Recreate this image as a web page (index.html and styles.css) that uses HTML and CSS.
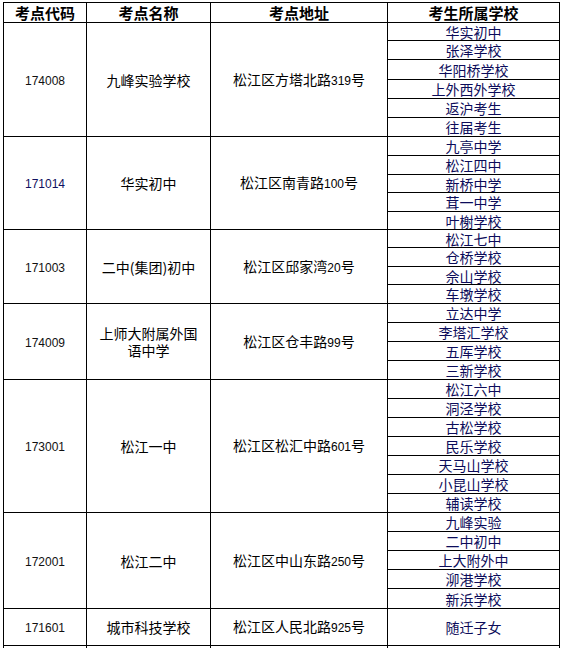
FILE: index.html
```html
<!DOCTYPE html>
<html lang="zh-CN">
<head>
<meta charset="utf-8">
<title>考点安排</title>
<link rel="stylesheet" href="styles.css">
</head>
<body>
<table class="exam">
  <colgroup>
    <col class="c-code">
    <col class="c-name">
    <col class="c-addr">
    <col class="c-school">
  </colgroup>
  <thead>
    <tr class="head">
      <th>考点代码</th>
      <th>考点名称</th>
      <th>考点地址</th>
      <th>考生所属学校</th>
    </tr>
  </thead>
  <tbody>
    <tr>
      <td rowspan="6" class="code"><span class="num">174008</span></td>
      <td rowspan="6" class="name">九峰实验学校</td>
      <td rowspan="6" class="addr">松江区方塔北路<span class="num">319</span>号</td>
      <td class="school r18">华实初中</td>
    </tr>
    <tr><td class="school">张泽学校</td></tr>
    <tr><td class="school r20">华阳桥学校</td></tr>
    <tr><td class="school">上外西外学校</td></tr>
    <tr><td class="school">返沪考生</td></tr>
    <tr><td class="school">往届考生</td></tr>

    <tr>
      <td rowspan="5" class="code navy"><span class="num">171014</span></td>
      <td rowspan="5" class="name">华实初中</td>
      <td rowspan="5" class="addr">松江区南青路<span class="num">100</span>号</td>
      <td class="school">九亭中学</td>
    </tr>
    <tr><td class="school">松江四中</td></tr>
    <tr><td class="school r18">新桥中学</td></tr>
    <tr><td class="school">茸一中学</td></tr>
    <tr><td class="school r18">叶榭学校</td></tr>

    <tr>
      <td rowspan="4" class="code"><span class="num">171003</span></td>
      <td rowspan="4" class="name">二中(集团)初中</td>
      <td rowspan="4" class="addr">松江区邱家湾<span class="num">20</span>号</td>
      <td class="school r18">松江七中</td>
    </tr>
    <tr><td class="school">仓桥学校</td></tr>
    <tr><td class="school r18">佘山学校</td></tr>
    <tr><td class="school">车墩学校</td></tr>

    <tr>
      <td rowspan="4" class="code"><span class="num">174009</span></td>
      <td rowspan="4" class="name two">上师大附属外国<br>语中学</td>
      <td rowspan="4" class="addr">松江区仓丰路<span class="num">99</span>号</td>
      <td class="school">立达中学</td>
    </tr>
    <tr><td class="school">李塔汇学校</td></tr>
    <tr><td class="school">五厍学校</td></tr>
    <tr><td class="school">三新学校</td></tr>

    <tr>
      <td rowspan="7" class="code"><span class="num">173001</span></td>
      <td rowspan="7" class="name">松江一中</td>
      <td rowspan="7" class="addr">松江区松汇中路<span class="num">601</span>号</td>
      <td class="school">松江六中</td>
    </tr>
    <tr><td class="school">洞泾学校</td></tr>
    <tr><td class="school">古松学校</td></tr>
    <tr><td class="school">民乐学校</td></tr>
    <tr><td class="school">天马山学校</td></tr>
    <tr><td class="school">小昆山学校</td></tr>
    <tr><td class="school">辅读学校</td></tr>

    <tr>
      <td rowspan="5" class="code"><span class="num">172001</span></td>
      <td rowspan="5" class="name">松江二中</td>
      <td rowspan="5" class="addr">松江区中山东路<span class="num">250</span>号</td>
      <td class="school">九峰实验</td>
    </tr>
    <tr><td class="school">二中初中</td></tr>
    <tr><td class="school">上大附外中</td></tr>
    <tr><td class="school">泖港学校</td></tr>
    <tr><td class="school r20">新浜学校</td></tr>

    <tr class="last">
      <td class="code"><span class="num">171601</span></td>
      <td class="name">城市科技学校</td>
      <td class="addr">松江区人民北路<span class="num">925</span>号</td>
      <td class="school fade">随迁子女</td>
    </tr>
    <tr class="tail">
      <td></td><td></td><td></td><td></td>
    </tr>
  </tbody>
</table>
</body>
</html>
```

FILE: styles.css
```css
html, body {
  margin: 0;
  padding: 0;
  background: #ffffff;
}

body {
  font-family: "Noto Sans CJK SC", "Liberation Sans", sans-serif;
  font-size: 14px;
  color: #000000;
}

.exam {
  border-collapse: collapse;
  table-layout: fixed;
  width: 556px;
  margin: 2px 0 0 3px;
}

.c-code { width: 83px; }
.c-name { width: 124px; }
.c-addr { width: 177px; }
.c-school { width: 172px; }

.exam th,
.exam td {
  border: 1px solid #000000;
  padding: 0;
  text-align: center;
  vertical-align: middle;
  line-height: 16px;
}

.head th {
  height: 19px;
  font-size: 15px;
  font-weight: 700;
  line-height: 18px;
}

.exam td.name.two {
  line-height: 17px;
}

.exam td.school {
  height: 18px;
  color: #0c0c5a;
  line-height: 16px;
}

.exam td.school.r18 { height: 17px; }
.exam td.school.r20 { height: 19px; }

.num {
  font-family: "Liberation Sans", sans-serif;
  font-size: 12px;
}

.code {
  color: #111111;
}

.code.navy {
  color: #101060;
}

.name,
.addr {
  color: #000000;
}

.last td {
  height: 36px;
}

.last td.school {
  height: 36px;
}

.fade {
  color: #2a2a60;
}

.tail td {
  height: 20px;
}
```
